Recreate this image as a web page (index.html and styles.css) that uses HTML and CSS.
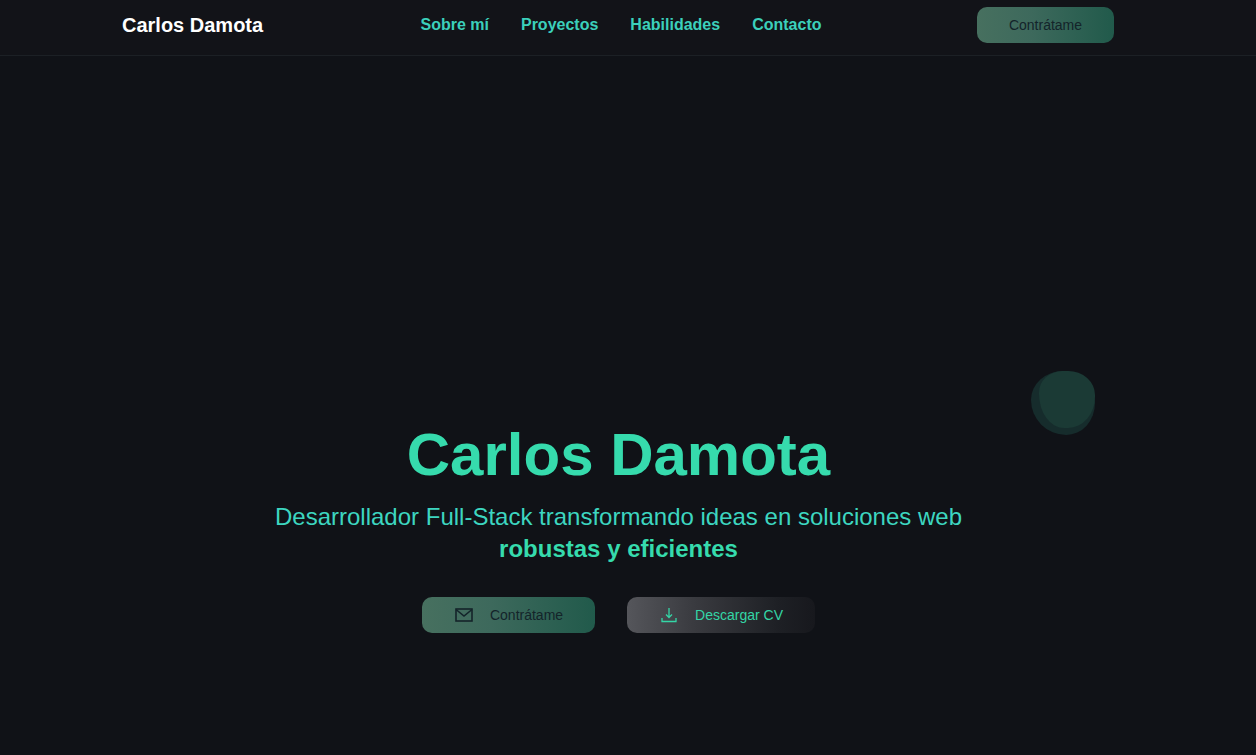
FILE: index.html
```html
<!DOCTYPE html>
<html lang="es">
<head>
<meta charset="utf-8">
<title>Carlos Damota</title>
<link rel="stylesheet" href="styles.css">
</head>
<body>
<header class="header">
  <div class="header-inner">
    <a class="logo" href="#">Carlos Damota</a>
    <nav class="nav">
      <a href="#">Sobre mí</a>
      <a href="#">Proyectos</a>
      <a href="#">Habilidades</a>
      <a href="#">Contacto</a>
    </nav>
    <a class="btn btn-primary btn-nav" href="#">Contrátame</a>
  </div>
</header>
<main class="hero">
  <div class="blob"><span class="blob-a"></span><span class="blob-b"></span></div>
  <h1 class="title">Carlos Damota</h1>
  <p class="subtitle">Desarrollador Full-Stack transformando ideas en soluciones web <strong>robustas y eficientes</strong></p>
  <div class="actions">
    <a class="btn btn-primary btn-hero" href="#">
      <svg class="icon" viewBox="0 0 18 14" fill="none" stroke="currentColor" stroke-width="1.6"><rect x="1" y="1" width="16" height="12"/><path d="M1 1.5l8 6.5 8-6.5"/></svg>
      <span>Contrátame</span>
    </a>
    <a class="btn btn-secondary btn-hero" href="#">
      <svg class="icon" viewBox="0 0 18 16" fill="none" stroke="currentColor" stroke-width="1.3"><path d="M9 1v9.5M6 7.5l3 3 3-3"/><path d="M2 11v3.5h14V11"/></svg>
      <span>Descargar CV</span>
    </a>
  </div>
</main>
</body>
</html>
```
FILE: styles.css
```css
* { box-sizing: border-box; }
html, body { margin: 0; height: 100%; }
body {
  background: #101217;
  font-family: "Liberation Sans", Arial, sans-serif;
  overflow: hidden;
}
a { text-decoration: none; }
.header {
  height: 56px;
  background: #121318;
  border-bottom: 1px solid #1c2025;
}
.header-inner {
  width: 992px;
  margin-left: 122px;
  height: 50px;
  display: flex;
  align-items: center;
  justify-content: space-between;
}
.logo { color: #fff; font-size: 20px; font-weight: 700; width: 142px; }
.nav { display: flex; gap: 32px; margin-left: 1px; }
.nav a { color: #3bd0bb; font-size: 16px; font-weight: 700; }
.btn {
  display: flex;
  align-items: center;
  height: 36px;
  border-radius: 10px;
  font-size: 14px;
}
.btn-primary {
  color: #14242a;
  background: linear-gradient(90deg, #47705f 0%, #3d695c 40%, #215a4b 100%);
}
.btn-secondary {
  color: #34d6a6;
  background: linear-gradient(90deg, #55565b 0%, #3a3b40 35%, #1e2025 80%, #17181d 100%);
}
.btn-nav { width: 137px; justify-content: center; }
.hero {
  position: relative;
  height: 699px;
  display: flex;
  flex-direction: column;
  align-items: center;
  padding: 365px 19px 0 0;
}
.title {
  margin: 0;
  color: #36dbad;
  font-size: 60px;
  line-height: 68px;
  font-weight: 700;
}
.subtitle {
  margin: 12px 0 0;
  width: 720px;
  text-align: center;
  color: #3dd6c0;
  font-size: 24px;
  line-height: 32px;
}
.subtitle strong { color: #36dbad; display: block; }
.actions { display: flex; gap: 32px; margin-top: 32px; }
.btn-hero { padding: 0 32px 0 33px; gap: 17px; }
.icon { width: 18px; height: 16px; flex: none; }
.blob { position: absolute; left: 1031px; top: 315px; width: 64px; height: 64px; }
.blob-a, .blob-b { position: absolute; inset: 0; }
.blob-a {
  background: #162c2c;
  border-radius: 50% 50% 45% 55% / 45% 50% 50% 55%;
}
.blob-b {
  background: #1b3a35;
  left: 8px;
  bottom: 7px;
  border-radius: 42% 48% 48% 45% / 38% 42% 55% 60%;
}
```
